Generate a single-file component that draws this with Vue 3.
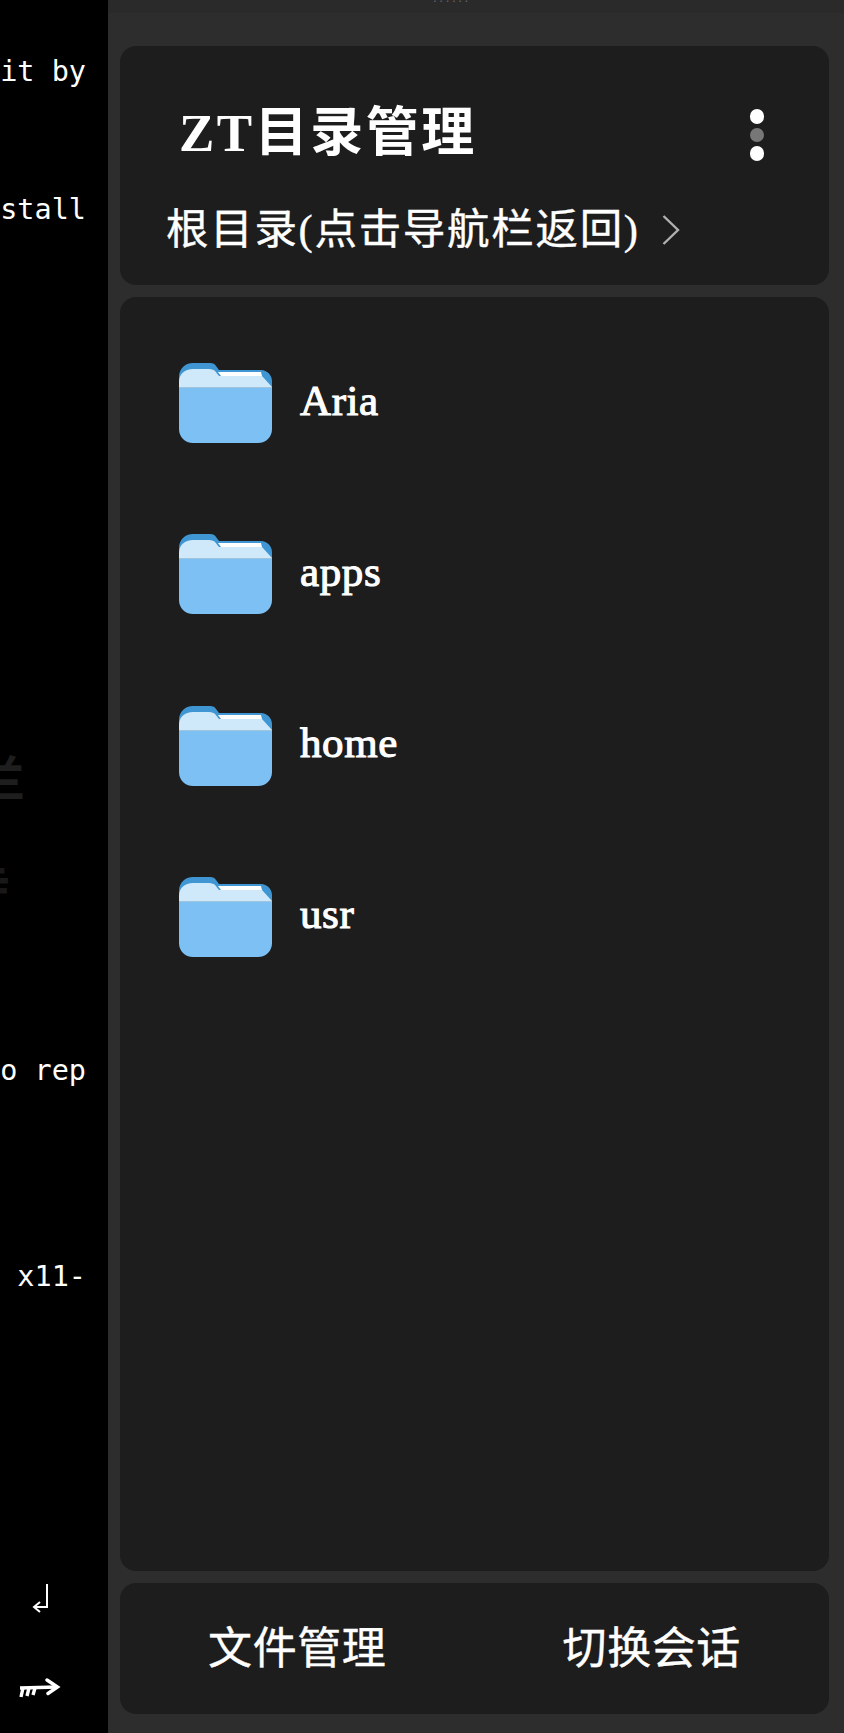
<script setup>
const folders = ['Aria', 'apps', 'home', 'usr']
const termLines = [
  { row: 0, text: 'it by' },
  { row: 4, text: 'stall' },
  { row: 29, text: 'o rep' },
  { row: 35, text: 'x11-' },
]
const rowPitch = 34.45
const rows = Array.from({ length: 36 }, (_, i) => termLines.find((l) => l.row === i)?.text ?? '')
</script>

<template>
  <div class="screen">
    <aside class="terminal">
      <div class="lines" :style="{ lineHeight: rowPitch + 'px' }">
        <div v-for="(t, i) in rows" :key="i" class="line">{{ t || '\u00a0' }}</div>
      </div>
      <div class="ghost">
        <span class="ghost-a">兰</span>
        <span class="ghost-b">寺</span>
      </div>
      <div class="keys">
        <svg class="key-enter" width="16" height="30" viewBox="0 0 16 30">
          <path d="M15 1V24H3M8 19L2 24L8 29" fill="none" stroke="#fff" stroke-width="2" />
        </svg>
        <svg class="key-tab" width="42" height="21" viewBox="0 0 42 21">
          <path d="M1 10L38 9" fill="none" stroke="#fff" stroke-width="3.4" />
          <path d="M28 2L38.5 9L29 15.5" fill="none" stroke="#fff" stroke-width="3.4" stroke-linecap="round" />
          <path d="M4 10L2 19M10 10L8 18M16 10L14 17" fill="none" stroke="#fff" stroke-width="3.4" />
        </svg>
      </div>
    </aside>

    <main class="panel">
      <div class="handle"><span class="handle-text">······</span></div>
      <div class="stack">
        <section class="card head">
          <div class="title-row">
            <h1 class="title">ZT目录管理</h1>
            <div class="menu">
              <i class="dot"></i>
              <i class="dot dim"></i>
              <i class="dot"></i>
            </div>
          </div>
          <div class="crumb">
            <span>根目录(点击导航栏返回)</span>
            <svg width="18" height="30" viewBox="0 0 18 30">
              <path d="M1.5 1L16 15L1.5 29" fill="none" stroke="#b0b0b0" stroke-width="2.4" />
            </svg>
          </div>
        </section>

        <section class="card list">
          <div v-for="f in folders" :key="f" class="row">
            <svg class="folder" width="93" height="80" viewBox="0 0 93 80">
              <path d="M0 22V14C0 6 6 0 14 0H31C34 0 36 1 37 3L40 7H82C88 7 93 12 93 18V26H0Z" fill="#3f96d2" />
              <path d="M0 27V19C0 11 6 6 14 6H30C33 6 35 7 36 8L40 13H83L93 24V27Z" fill="#cfe9fb" />
              <path d="M39 9H82L83 13H42Z" fill="#ffffff" />
              <path d="M0 24H93V66C93 74 87 80 79 80H14C6 80 0 74 0 66Z" fill="#7dc0f3" />
              <path d="M0 24H93V25H0Z" fill="#9fc4dc" />
            </svg>
            <span class="name">{{ f }}</span>
          </div>
        </section>

        <nav class="card foot">
          <span class="tab">文件管理</span>
          <span class="tab">切换会话</span>
        </nav>
      </div>
    </main>
  </div>
</template>

<style>
html, body { margin: 0; padding: 0; background: #000; }
</style>

<style scoped>
.screen {
  width: 844px;
  height: 1733px;
  display: flex;
  overflow: hidden;
  background: #000;
  font-family: "Liberation Serif", "Noto Sans CJK SC", serif;
  color: #fff;
}
.terminal {
  position: relative;
  width: 108px;
  flex: none;
  overflow: hidden;
  display: flex;
  flex-direction: column;
}
.lines {
  padding-top: 55px;
  font-family: "DejaVu Sans Mono", monospace;
  font-size: 28.5px;
  color: #fff;
}
.line {
  height: 34.45px;
  display: flex;
  justify-content: flex-end;
  padding-right: 22px;
  white-space: pre;
  overflow: hidden;
}
.ghost {
  position: absolute;
  left: -23px;
  top: 747px;
  font-family: "Noto Sans CJK SC", sans-serif;
  color: #1e1e1e;
  font-size: 48px;
  font-weight: 700;
  line-height: 56px;
  display: flex;
  flex-direction: column;
}
.ghost-b {
  margin-top: 52px;
  color: #181818;
  margin-left: -15px;
}
.keys {
  margin-top: auto;
  height: 150px;
  display: flex;
  flex-direction: column;
  align-items: flex-start;
  box-sizing: border-box;
}
.key-enter { margin-left: 32px; }
.key-tab { margin-top: 65px; margin-left: 19px; }
.panel {
  flex: 1;
  min-width: 0;
  background: #2d2d2d;
  display: flex;
  flex-direction: column;
}
.handle {
  height: 13px;
  background: #2a2a2a;
  display: flex;
  justify-content: center;
  overflow: hidden;
}
.handle-text {
  color: #666;
  font: 12px/4px "DejaVu Sans", sans-serif;
  letter-spacing: 2.5px;
  margin-right: 48px;
  height: 3px;
}
.stack {
  flex: 1;
  display: flex;
  flex-direction: column;
  gap: 12px;
  padding: 33px 15px 19px 12px;
  min-height: 0;
}
.card {
  background: #1d1d1d;
  border-radius: 16px;
}
.head {
  height: 239px;
  box-sizing: border-box;
  padding: 57px 65px 0 46px;
  flex: none;
}
.title-row {
  display: flex;
  justify-content: space-between;
  align-items: flex-start;
  padding-left: 13px;
}
.title {
  margin: 0;
  font-size: 53px;
  font-weight: 700;
  line-height: 60px;
  letter-spacing: 2.5px;
  font-family: "Liberation Serif", "Noto Sans CJK SC", serif;
}
.menu {
  display: flex;
  flex-direction: column;
  gap: 4px;
  padding-top: 6px;
}
.dot {
  display: block;
  width: 14.5px;
  height: 14.5px;
  border-radius: 50%;
  background: #fff;
}
.dot.dim { background: #777; }
.crumb {
  margin-top: 42px;
  display: flex;
  align-items: center;
  gap: 22px;
  font-size: 42.5px;
  line-height: 50px;
  letter-spacing: 1.7px;
  -webkit-text-stroke: 0.4px #fff;
}
.list {
  flex: 1;
  min-height: 0;
  padding: 66px 0 0 59px;
  display: flex;
  flex-direction: column;
  gap: 91.3px;
}
.row {
  display: flex;
  align-items: center;
  gap: 28px;
  height: 80px;
}
.folder { flex: none; }
.name {
  font-size: 43px;
  line-height: 50px;
  letter-spacing: 0.6px;
  -webkit-text-stroke: 1.1px #fff;
  margin-top: -5px;
}
.foot {
  height: 131px;
  flex: none;
  display: flex;
  align-items: center;
}
.tab {
  flex: 1;
  text-align: center;
  font-size: 44px;
  line-height: 50px;
  letter-spacing: 0.6px;
  -webkit-text-stroke: 0.4px #fff;
  margin-top: 3px;
}
</style>
